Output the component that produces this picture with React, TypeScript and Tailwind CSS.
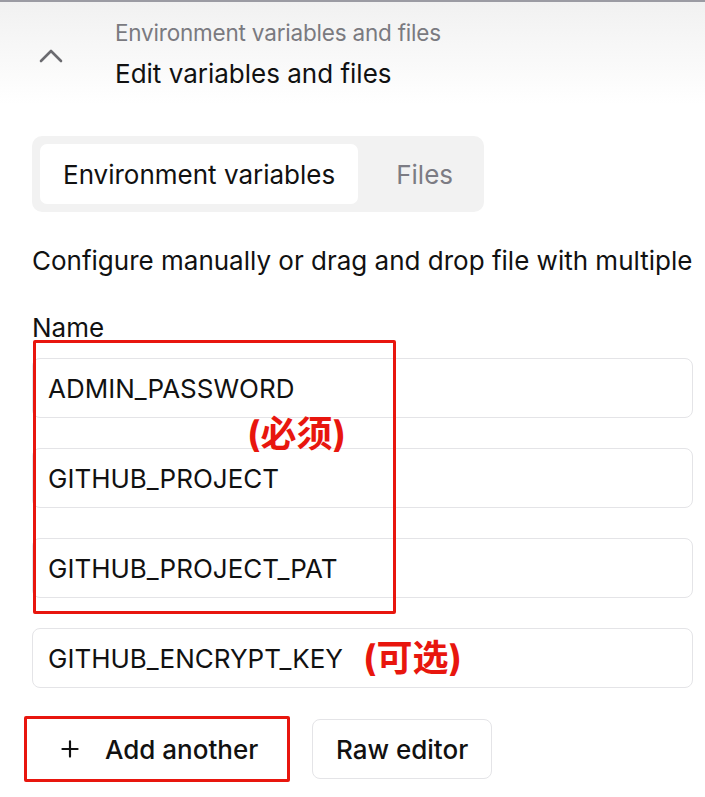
import { Plus } from 'lucide-react'

const names = ['ADMIN_PASSWORD', 'GITHUB_PROJECT', 'GITHUB_PROJECT_PAT']

const App = () => {
  return (
    <div className="w-[705px] h-[797px] overflow-hidden bg-white text-[#111] font-['Inter','Noto_Sans_CJK_SC',sans-serif]">
      {/* header */}
      <div className="border-t-2 border-[#9b9ba3] bg-gradient-to-b from-[#f1f1f1] to-white h-[104px] flex items-center">
        <div className="w-[115px] flex pl-[39px] pt-[6px]">
          <svg width="24" height="14" viewBox="0 0 24 14" fill="none">
            <polyline points="2,12 12,2 22,12" stroke="#6b6b70" strokeWidth="2.6" strokeLinecap="round" strokeLinejoin="round" />
          </svg>
        </div>
        <div className="flex flex-col gap-[12px] pt-[2px]">
          <p className="text-[22.5px] leading-[28px] text-[#7a7a80] tracking-[-0.2px]">Environment variables and files</p>
          <p className="text-[26px] leading-[30px] text-[#111]">Edit variables and files</p>
        </div>
      </div>

      <div className="pl-[32px] pr-[12px] pt-[32px]">
        {/* tabs */}
        <div className="inline-flex items-center bg-[#f2f2f2] rounded-[10px] p-[8px] pr-[31px] gap-[38px]">
          <div className="bg-white rounded-[7px] px-[23px] h-[60px] flex items-center text-[26px]">
            Environment variables
          </div>
          <span className="text-[26px] text-[#7c7c84]">Files</span>
        </div>

        <p className="mt-[34px] text-[26px] leading-[30px] whitespace-nowrap">
          Configure manually or drag and drop file with multiple
        </p>

        <p className="mt-[38px] text-[26px] leading-[28px]">Name</p>

        <div className="relative mt-[16px] flex flex-col gap-[30px]">
          {names.map(n => (
            <div key={n} className="h-[60px] border border-[#e4e4e7] rounded-[8px] flex items-center px-[15px] text-[26px]">
              {n}
            </div>
          ))}
          <div className="h-[60px] border border-[#e4e4e7] rounded-[8px] flex items-center px-[15px] text-[26px]">
            GITHUB_ENCRYPT_KEY
            <span className="ml-[20px] text-[36px] leading-[40px] font-bold text-[#e8160e]">(可选)</span>
          </div>

          {/* annotation */}
          <div className="absolute left-[1px] top-[-18px] w-[363px] h-[274px] border-[3px] border-[#e8160e] rounded-[2px] pointer-events-none" />
          <span className="absolute left-[215px] top-[56px] text-[36px] leading-[40px] font-bold text-[#e8160e]">(必须)</span>
        </div>

        <div className="mt-[28px] flex items-center gap-[22px]">
          <div className="relative -ml-[8px] w-[266px] h-[66px] border-[3px] border-[#e8160e] rounded-[2px] flex items-center pl-[30px] gap-[22px] text-[26px] font-medium">
            <Plus size={26} strokeWidth={2} />
            Add another
          </div>
          <button className="h-[60px] px-[23px] border border-[#e4e4e7] rounded-[8px] text-[26px] font-medium">
            Raw editor
          </button>
        </div>
      </div>
    </div>
  )
}

export default App
